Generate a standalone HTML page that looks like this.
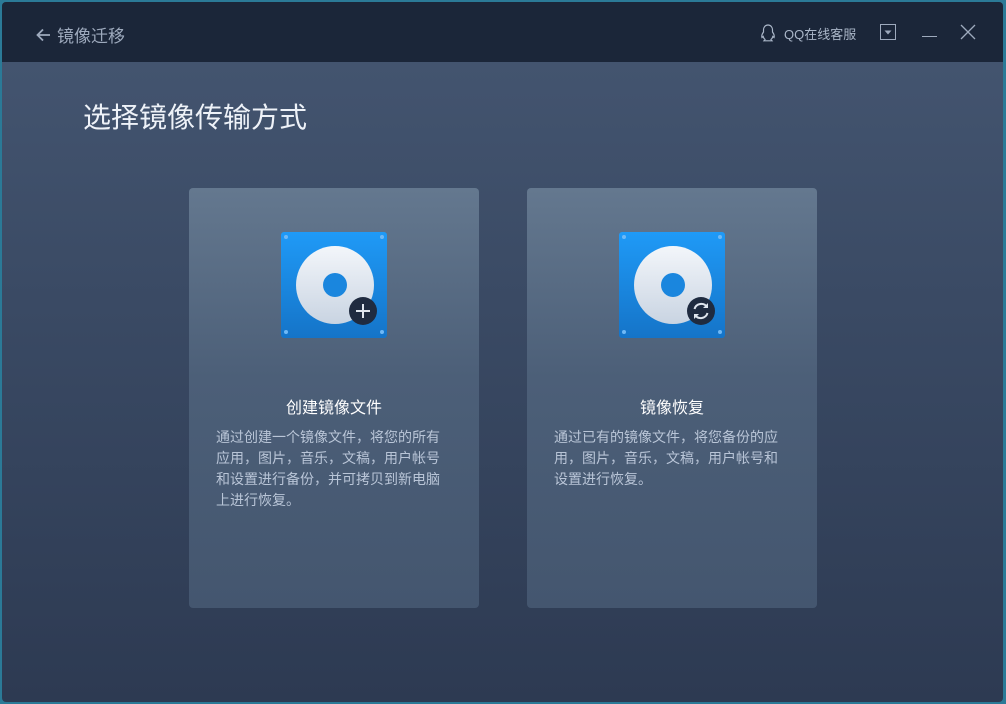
<!DOCTYPE html>
<html><head><meta charset="utf-8"><style>
*{margin:0;padding:0;box-sizing:border-box}
html,body{width:1006px;height:704px;overflow:hidden;background:#2b7a97}
body{font-family:"Liberation Sans","Noto Sans CJK SC",sans-serif}
.win{position:absolute;left:2px;top:2px;width:1001px;height:700px;border-radius:4px;overflow:hidden;background:linear-gradient(#43546f 62px,#3a4a64 300px,#2d3a52 700px)}
.bar{position:absolute;left:0;top:0;width:100%;height:60px;background:#1b2639}
.back{position:absolute;left:33px;top:20px;color:#9eaabd;font-size:17px;display:flex;align-items:center}
.qq{position:absolute;left:757px;top:21px;color:#aab6c8;font-size:13px;display:flex;align-items:center}
h1{position:absolute;left:81px;top:94px;font-size:28px;font-weight:normal;color:#eef2f8}
.card{position:absolute;top:186px;width:290px;height:420px;border-radius:4px;background:linear-gradient(#64788f,#4c5f78 45%,#44566f)}
.card h2{position:absolute;top:206px;width:100%;text-align:center;font-size:16px;font-weight:normal;color:#fff}
.card p{position:absolute;left:27px;top:239px;width:228px;font-size:14px;line-height:21px;color:#b9c5d7}
.ic{position:absolute;left:92px;top:44px}
</style></head><body>
<div class="win">
<div class="bar">
<div class="back"><svg width="18" height="18" viewBox="0 0 18 18"><path d="M15 9H3M8 3.5L2.5 9L8 14.5" stroke="#9eaabd" stroke-width="1.8" fill="none"/></svg><span style="margin-left:4px">镜像迁移</span></div>
<div class="qq"><svg width="18" height="20" viewBox="0 0 18 20"><path d="M9 2c3 0 4.5 2.5 4.5 5v2c1.5 2 2 4 1.5 5.5l-1.2-1c-.3 1.3-1 2.3-1.8 3l1 1.3H5l1-1.3c-.8-.7-1.5-1.7-1.8-3l-1.2 1C2.5 13 3 11 4.5 9V7C4.5 4.5 6 2 9 2z" stroke="#aab6c8" stroke-width="1.2" fill="none"/></svg><span style="margin-left:7px">QQ在线客服</span></div>
<svg style="position:absolute;left:878px;top:22px" width="17" height="17"><rect x=".5" y=".5" width="15" height="15" fill="none" stroke="#9eaabd"/><path d="M4.5 6.5h7l-3.5 4z" fill="#9eaabd"/></svg>
<div style="position:absolute;left:920px;top:34px;width:15px;height:1px;background:#9eaabd"></div>
<svg style="position:absolute;left:958px;top:22px" width="16" height="16"><path d="M1 1L15 15M15 1L1 15" stroke="#9eaabd" stroke-width="1.3"/></svg>
</div>
<h1>选择镜像传输方式</h1>
<div class="card" style="left:187px">
<svg class="ic" width="106" height="106" viewBox="0 0 106 106"><defs><linearGradient id="g" x1="0" y1="0" x2="0" y2="1"><stop offset="0" stop-color="#1f9af7"/><stop offset="1" stop-color="#1574c8"/></linearGradient><linearGradient id="d" x1="0" y1="0" x2="0" y2="1"><stop offset="0" stop-color="#f3f6fa"/><stop offset="1" stop-color="#c9d4e2"/></linearGradient></defs><rect width="106" height="106" rx="3" fill="url(#g)"/><circle cx="5" cy="5" r="2" fill="#6fb8f5"/><circle cx="101" cy="5" r="2" fill="#6fb8f5"/><circle cx="5" cy="100" r="2" fill="#6fb8f5"/><circle cx="101" cy="100" r="2" fill="#6fb8f5"/><circle cx="54" cy="53" r="39" fill="url(#d)"/><circle cx="54" cy="53" r="12" fill="#1a86de"/><circle cx="82" cy="79" r="14" fill="#1f2b40"/><path d="M82 72v14M75 79h14" stroke="#dfe5ee" stroke-width="2"/></svg>
<h2>创建镜像文件</h2>
<p>通过创建一个镜像文件，将您的所有应用，图片，音乐，文稿，用户帐号和设置进行备份，并可拷贝到新电脑上进行恢复。</p>
</div>
<div class="card" style="left:525px">
<svg class="ic" width="106" height="106" viewBox="0 0 106 106"><rect width="106" height="106" rx="3" fill="url(#g)"/><circle cx="5" cy="5" r="2" fill="#6fb8f5"/><circle cx="101" cy="5" r="2" fill="#6fb8f5"/><circle cx="5" cy="100" r="2" fill="#6fb8f5"/><circle cx="101" cy="100" r="2" fill="#6fb8f5"/><circle cx="54" cy="53" r="39" fill="url(#d)"/><circle cx="54" cy="53" r="12" fill="#1a86de"/><circle cx="82" cy="79" r="14" fill="#1f2b40"/><path d="M75.5 77a7 7 0 0 1 12.5-2M88.5 81a7 7 0 0 1-12.5 2" stroke="#dfe5ee" stroke-width="2" fill="none"/><path d="M89 71v5h-5zM75 87v-5h5z" fill="#dfe5ee"/></svg>
<h2>镜像恢复</h2>
<p>通过已有的镜像文件，将您备份的应用，图片，音乐，文稿，用户帐号和设置进行恢复。</p>
</div>
</div>
</body></html>
